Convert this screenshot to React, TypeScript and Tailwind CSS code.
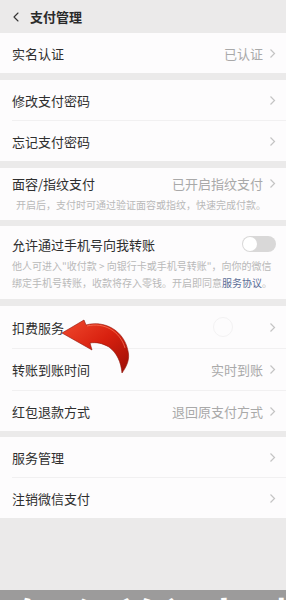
import { ChevronLeft } from "lucide-react";

const font = { fontFamily: '"Noto Sans CJK SC", "Noto Sans", sans-serif' };

function Chevron() {
  return (
    <svg width="7" height="11" viewBox="0 0 7 11" className="shrink-0">
      <path d="M1.5 1.5 L5.5 5.5 L1.5 9.5" fill="none" stroke="#c4c4c4" strokeWidth="1.2" />
    </svg>
  );
}

function Row({
  label,
  value,
  divider,
  h = "h-10",
}: {
  label: string;
  value?: string;
  divider?: boolean;
  h?: string;
}) {
  return (
    <div className={divider ? "border-t border-[#f1f0f1] ml-3" : "ml-3"}>
      <div className={`flex items-center justify-between pr-[10px] ${h}`}>
        <span className="text-[13px] text-[#2f2f2f]">{label}</span>
        <div className="flex items-center gap-[6px]">
          {value && <span className="text-[13px] text-[#a9a9a9]">{value}</span>}
          <Chevron />
        </div>
      </div>
    </div>
  );
}

function Gap({ h }: { h: string }) {
  return <div className={h} />;
}

export default function App() {
  return (
    <div
      className="relative w-[286px] h-[600px] overflow-hidden bg-[#ebeaea] leading-none"
      style={font}
    >
      {/* Header */}
      <div className="flex items-center h-[33px] bg-[#ebeaea]">
        <ChevronLeft size={16} strokeWidth={1.6} className="ml-[8px] text-[#333]" />
        <span className="ml-[6px] text-[13px] font-bold text-[#2a2a2a]">支付管理</span>
      </div>

      {/* Real name */}
      <div className="bg-[#fdfcfd]">
        <Row label="实名认证" value="已认证" h="h-[40px]" />
      </div>
      <Gap h="h-[7px]" />

      {/* Passwords */}
      <div className="bg-[#fdfcfd]">
        <Row label="修改支付密码" />
        <Row label="忘记支付密码" divider />
      </div>
      <Gap h="h-[7px]" />

      {/* Face / fingerprint */}
      <div className="bg-[#fdfcfd] pl-3 pr-[10px] pt-[7px] pb-[8px]">
        <div className="flex items-center justify-between h-4">
          <span className="text-[13px] text-[#2f2f2f]">面容/指纹支付</span>
          <div className="flex items-center gap-[6px]">
            <span className="text-[13px] text-[#a9a9a9]">已开启指纹支付</span>
            <Chevron />
          </div>
        </div>
        <p className="mt-[7px] pl-[4px] text-[10px] leading-[14px] text-[#b9b9b9]">
          开启后，支付时可通过验证面容或指纹，快速完成付款。
        </p>
      </div>
      <Gap h="h-[6px]" />

      {/* Phone transfer */}
      <div className="bg-[#fdfcfd] pl-3 pr-[10px] pt-[10px] pb-[8px]">
        <div className="flex items-center justify-between h-4">
          <span className="text-[13px] text-[#2f2f2f]">允许通过手机号向我转账</span>
          <div className="relative w-[34px] h-[16px] rounded-full bg-[#d9d8d8]">
            <div className="absolute left-[1px] top-[1px] w-[14px] h-[14px] rounded-full bg-white" />
          </div>
        </div>
        <p className="mt-[5px] text-[10px] leading-[17px] text-[#b9b9b9]">
          他人可进入"收付款 &gt; 向银行卡或手机号转账"，向你的微信
          <br />
          绑定手机号转账，收款将存入零钱。开启即同意
          <span className="text-[#5a6c96]">服务协议</span>。
        </p>
      </div>
      <Gap h="h-[7px]" />

      {/* Services */}
      <div className="bg-[#fdfcfd]">
        <div className="relative">
          <Row label="扣费服务" h="h-[42px]" />
          <div className="absolute left-[213px] top-[11px] w-[20px] h-[20px] rounded-full border border-[#f3f2f3]" />
        </div>
        <Row label="转账到账时间" value="实时到账" divider h="h-[41px]" />
        <Row label="红包退款方式" value="退回原支付方式" divider h="h-[40px]" />
      </div>
      <Gap h="h-[6px]" />

      <div className="bg-[#fdfcfd]">
        <Row label="服务管理" />
        <Row label="注销微信支付" divider />
      </div>

      {/* Video caption band */}
      <div className="absolute left-0 right-0 top-[590px] bottom-0 bg-[#9c9b9b] overflow-hidden">
        <div className="pl-[14px] pt-[5px] text-[44px] font-bold text-white tracking-[6px] whitespace-nowrap leading-none">
          怎么关闭扣费服务
        </div>
      </div>

      {/* Red arrow */}
      <svg
        className="absolute left-0 top-0 pointer-events-none"
        width="286"
        height="600"
        viewBox="0 0 286 600"
      >
        <defs>
          <linearGradient id="arrowFill" x1="0" y1="0" x2="1" y2="1">
            <stop offset="0" stopColor="#f04a2e" />
            <stop offset="0.5" stopColor="#d8200f" />
            <stop offset="1" stopColor="#9c0e06" />
          </linearGradient>
        </defs>
        <path
          d="M62 333 L84 320 L86 325 C104 320 124 330 128 351 C130 359 127 366 122 373 C121 362 117 353 109 347 C102 343 96 342 90 343 L92 350 Z"
          fill="url(#arrowFill)"
          stroke="#8e1206"
          strokeWidth="0.6"
        />
        <path
          d="M87 326 C104 322 120 331 125 348"
          fill="none"
          stroke="#ff8a6a"
          strokeWidth="1"
          opacity="0.6"
        />
      </svg>
    </div>
  );
}
